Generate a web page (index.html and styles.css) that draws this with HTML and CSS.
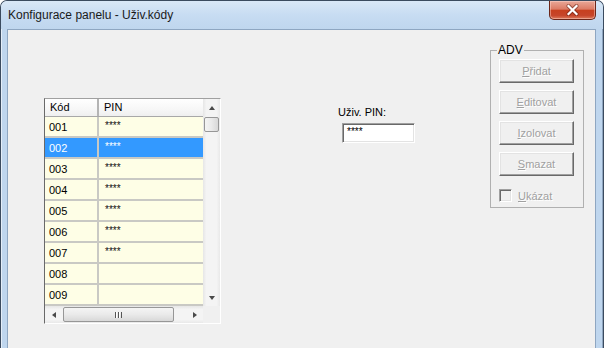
FILE: index.html
```html
<!DOCTYPE html>
<html lang="cs">
<head>
  <meta charset="UTF-8">
  <title>Konfigurace panelu - Uživ.kódy</title>
  <link rel="stylesheet" href="styles.css">
</head>
<body>

  <div class="okno">
    <div class="titulek">
      <span class="titulek-text">Konfigurace panelu - Uživ.kódy</span>
      <button class="zavrit" title="Zavřít">
        <svg width="13" height="12" viewBox="0 0 13 12">
          <path d="M2.5 2 L10.5 10 M10.5 2 L2.5 10" stroke="#5c1b10" stroke-width="4" stroke-linecap="round" fill="none" opacity="0.55"/>
          <path d="M2.5 2 L10.5 10 M10.5 2 L2.5 10" stroke="#fff" stroke-width="2.2" stroke-linecap="square" fill="none"/>
        </svg>
      </button>
    </div>

    <div class="klient">

      <div class="seznam">
        <div class="seznam-hlavni">
          <div class="mrizka">
            <div class="hlavicka"><span class="sl-kod">Kód</span><span class="sl-pin">PIN</span></div>
            <div class="radek"><span class="sl-kod">001</span><span class="sl-pin">****</span></div>
            <div class="radek vybrany"><span class="sl-kod">002</span><span class="sl-pin">****</span></div>
            <div class="radek"><span class="sl-kod">003</span><span class="sl-pin">****</span></div>
            <div class="radek"><span class="sl-kod">004</span><span class="sl-pin">****</span></div>
            <div class="radek"><span class="sl-kod">005</span><span class="sl-pin">****</span></div>
            <div class="radek"><span class="sl-kod">006</span><span class="sl-pin">****</span></div>
            <div class="radek"><span class="sl-kod">007</span><span class="sl-pin">****</span></div>
            <div class="radek"><span class="sl-kod">008</span><span class="sl-pin"></span></div>
            <div class="radek"><span class="sl-kod">009</span><span class="sl-pin"></span></div>
          </div>
          <div class="vscroll">
            <span class="sipka-btn"><i class="sipka nahoru"></i></span>
            <span class="vjezdec"></span>
            <span class="drazka"></span>
            <span class="sipka-btn"><i class="sipka dolu"></i></span>
          </div>
        </div>
        <div class="seznam-spodek">
          <div class="hscroll">
            <span class="sipka-btn"><i class="sipka vlevo"></i></span>
            <span class="hjezdec"></span>
            <span class="drazka"></span>
            <span class="sipka-btn"><i class="sipka vpravo"></i></span>
          </div>
          <div class="roh"></div>
        </div>
      </div>

      <div class="pin-blok">
        <label class="pin-popis">Uživ. PIN:</label>
        <div class="pin-pole">****</div>
      </div>

      <fieldset class="skupina">
        <legend>ADV</legend>
        <button class="tlacitko" disabled><u>P</u>řidat</button>
        <button class="tlacitko" disabled><u>E</u>ditovat</button>
        <button class="tlacitko" disabled><u>I</u>zolovat</button>
        <button class="tlacitko" disabled><u>S</u>mazat</button>
        <label class="zaskrt"><span class="ctverec"></span><span><u>U</u>kázat</span></label>
      </fieldset>

    </div>
  </div>

</body>
</html>
```

FILE: styles.css
```css
:root {
  --ram: #bfd6ee;
  --ram-okraj: #3b4b5f;
  --plocha: #f0f0f0;
  --radek: #fefee6;
  --mrizka: #c9c9c4;
  --vyber: #3399ff;
  --zakazano: #a0a0a0;

  --pismo: "Liberation Sans", Arial, sans-serif;
}

* {
  margin: 0;
  padding: 0;
  box-sizing: border-box;
}

body {
  font-family: var(--pismo);
  font-size: 11px;
  color: #000;
  background: #fff;
  width: 608px;
  height: 348px;
  overflow: hidden;
}

/* okno */
.okno {
  width: 604px;
  height: 360px;
  background: var(--ram);
  border: 1px solid var(--ram-okraj);
  border-bottom: none;
  border-radius: 7px 7px 0 0;
  padding: 0 7px 0 6px;
  display: flex;
  flex-direction: column;
  box-shadow: inset -1px 0 0 #8ea5bf, inset 1px 1px 0 #e4eef9;
}

.titulek {
  height: 28px;
  display: flex;
  align-items: flex-start;
  margin: 0 -7px 0 -6px;
  padding-left: 7px;
  padding-right: 7px;
  border-radius: 6px 6px 0 0;
  background: linear-gradient(180deg, #d9e8f7 0%, #c7dcf2 50%, #bfd6ee 100%);
}

.titulek-text {
  font-size: 12px;
  line-height: 15px;
  padding-top: 7px;
  color: #1a1a1a;
}

.zavrit {
  margin-left: auto;
  width: 47px;
  height: 19px;
  border: 1px solid #6b2619;
  border-top: none;
  border-radius: 0 0 5px 5px;
  background: linear-gradient(180deg, #e9a898 0%, #dc7b65 45%, #c7401f 52%, #c6452a 80%, #dd7a5c 100%);
  box-shadow: inset 0 0 0 1px rgba(255, 220, 210, 0.45);
  display: flex;
  align-items: center;
  justify-content: center;
}

.klient {
  flex: 1;
  background: var(--plocha);
  border: 1px solid #8ea6c1;
  border-bottom: none;
  display: flex;
  align-items: flex-start;
}

/* seznam */
.seznam {
  margin: 68px 0 0 36px;
  width: 177px;
  height: 226px;
  border: 1px solid;
  border-color: #a0a0a0 #fff #fff #696969;
  display: flex;
  flex-direction: column;
}

.seznam-hlavni {
  display: flex;
  height: 207px;
}

.mrizka {
  width: 158px;
  background: var(--radek);
}

.hlavicka {
  height: 18px;
  display: flex;
  background: linear-gradient(180deg, #fff 0%, #f7f7f7 60%, #efefef 100%);
  border-bottom: 1px solid #a8a8a8;
  line-height: 17px;
}

.hlavicka .sl-kod {
  width: 54px;
  padding-left: 5px;
  border-right: 2px solid #b4b4b4;
}

.hlavicka .sl-pin {
  padding-left: 5px;
}

.radek {
  height: 21px;
  display: flex;
  border-bottom: 2px solid var(--mrizka);
  line-height: 21px;
}

.radek .sl-kod {
  width: 54px;
  padding-left: 4px;
  border-right: 2px solid var(--mrizka);
}

.radek .sl-pin {
  flex: 1;
  padding-left: 6px;
  font-size: 10px;
  line-height: 18px;
  color: #111;
}

.radek.vybrany .sl-kod,
.radek.vybrany .sl-pin {
  background: var(--vyber);
  color: #fff;
}

/* posuvniky */
.vscroll {
  width: 17px;
  display: flex;
  flex-direction: column;
  background: linear-gradient(90deg, #e6e6e6 0%, #f4f4f4 20%, #f4f4f4 80%, #e9e9e9 100%);
}

.hscroll {
  flex: 1;
  display: flex;
  background: linear-gradient(180deg, #e6e6e6 0%, #f4f4f4 20%, #f4f4f4 80%, #e9e9e9 100%);
}

.sipka-btn {
  width: 17px;
  height: 17px;
  display: flex;
  align-items: center;
  justify-content: center;
}

.drazka {
  flex: 1;
}

.sipka {
  width: 0;
  height: 0;
  border: 0 solid transparent;
}

.sipka.nahoru {
  border-width: 0 3px 4px 3px;
  border-bottom-color: #4a4a4a;
}

.sipka.dolu {
  border-width: 4px 3px 0 3px;
  border-top-color: #4a4a4a;
}

.sipka.vlevo {
  border-width: 3px 4px 3px 0;
  border-right-color: #4a4a4a;
}

.sipka.vpravo {
  border-width: 3px 0 3px 4px;
  border-left-color: #4a4a4a;
}

.vjezdec {
  margin: 1px 1px 0 1px;
  height: 15px;
  border: 1px solid #979797;
  border-radius: 2px;
  background: linear-gradient(90deg, #f4f4f4 0%, #eaeaea 50%, #d8d8d8 100%);
}

.hjezdec {
  margin: 1px 0 1px 1px;
  width: 111px;
  border: 1px solid #979797;
  border-radius: 2px;
  background: linear-gradient(180deg, #f4f4f4 0%, #eaeaea 50%, #d8d8d8 100%);
  display: flex;
  align-items: center;
  justify-content: center;
}

.hjezdec::after {
  content: "";
  width: 7px;
  height: 6px;
  background: repeating-linear-gradient(90deg, #555 0 1px, #fff 1px 2px, transparent 2px 3px);
}

.seznam-spodek {
  height: 17px;
  display: flex;
}

.roh {
  width: 17px;
  background: var(--plocha);
}

/* pin */
.pin-blok {
  margin: 76px 0 0 117px;
  display: flex;
  flex-direction: column;
}

.pin-popis {
  line-height: 13px;
}

.pin-pole {
  margin: 4px 0 0 4px;
  width: 73px;
  height: 20px;
  background: #fff;
  border: 1px solid;
  border-color: #a0a0a0 #fff #fff #a0a0a0;
  box-shadow: inset 1px 1px 0 #696969, inset -1px -1px 0 #e3e3e3;
  padding: 2px 0 0 4px;
  font-size: 10px;
  line-height: 12px;
}

/* skupina ADV */
.skupina {
  margin: 14px 11px 0 auto;
  width: 94px;
  border: 1px solid #b0b0b0;
  padding: 2px 9px 5px 8px;
  display: flex;
  flex-direction: column;
}

.skupina legend {
  margin-left: -2px;
  padding: 0 1px;
  font-size: 12px;
  line-height: 13px;
}

.tlacitko {
  width: 75px;
  height: 24px;
  margin-bottom: 7px;
  font-family: var(--pismo);
  font-size: 11px;
  color: var(--zakazano);
  text-shadow: 1px 1px 0 #fff;
  background: var(--plocha);
  border: 1px solid;
  border-color: #fff #696969 #696969 #fff;
  box-shadow: inset -1px -1px 0 #a0a0a0, inset 1px 1px 0 #e3e3e3;
}

.zaskrt {
  margin-top: 6px;
  display: flex;
  align-items: center;
  gap: 6px;
  height: 13px;
  color: var(--zakazano);
  text-shadow: 1px 1px 0 #fff;
}

.ctverec {
  width: 13px;
  height: 13px;
  background: var(--plocha);
  border: 1px solid;
  border-color: #a0a0a0 #fff #fff #a0a0a0;
  box-shadow: inset 1px 1px 0 #696969, inset -1px -1px 0 #e3e3e3;
}
```
